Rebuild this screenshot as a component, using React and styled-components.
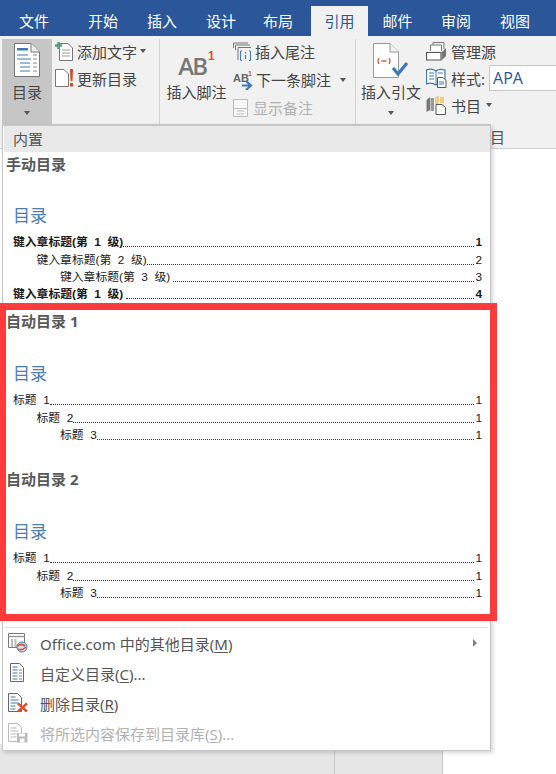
import React from 'react';
import styled, { createGlobalStyle } from 'styled-components';

const GlobalStyle = createGlobalStyle`
  html, body {
    margin: 0;
    padding: 0;
    background: #ffffff;
  }
  body {
    font-family: "Noto Sans", "Noto Sans CJK SC", sans-serif;
  }
`;

const Page = styled.div`
  position: relative;
  width: 556px;
  height: 774px;
  overflow: hidden;
  display: flex;
  flex-direction: column;
  background: #ffffff;
`;

const TabBar = styled.nav`
  height: 36px;
  flex: none;
  display: flex;
  align-items: flex-end;
  background: #2b579a;
`;

const Tab = styled.div`
  width: ${(p) => p.$w}px;
  height: 30px;
  flex: none;
  margin-left: ${(p) => p.$ml || 0}px;
  padding-bottom: 2px;
  box-sizing: border-box;
  display: flex;
  align-items: center;
  justify-content: center;
  font-size: 15px;
  color: ${(p) => (p.$active ? '#2b579a' : '#ffffff')};
  background: ${(p) => (p.$active ? '#f1f1f1' : 'transparent')};
`;

const Ribbon = styled.div`
  height: 113px;
  flex: none;
  display: flex;
  padding-top: 3px;
  box-sizing: border-box;
  background: #f1f1f1;
  border-bottom: 1px solid #d2d2d2;
`;

const Group = styled.section`
  width: ${(p) => p.$w}px;
  height: 85px;
  flex: none;
  display: flex;
  box-sizing: border-box;
  border-right: ${(p) => (p.$last ? 'none' : '1px solid #d4d4d4')};
`;

const BigButton = styled.div`
  width: ${(p) => p.$w}px;
  height: 85px;
  flex: none;
  margin-left: ${(p) => p.$ml || 0}px;
  display: flex;
  flex-direction: column;
  align-items: center;
  background: ${(p) => (p.$active ? '#c6c6c6' : 'transparent')};
  padding-top: ${(p) => p.$pt || 0}px;
  box-sizing: border-box;
`;

const BigLabel = styled.div`
  font-size: 15px;
  line-height: 18px;
  color: #444444;
  margin-top: ${(p) => p.$mt || 0}px;
  white-space: nowrap;
`;

const NoteMark = styled.div`
  height: 30px;
  display: flex;
  align-items: flex-start;
`;

const NoteLetters = styled.span`
  padding-top: 2px;
  font-family: "Open Sans", sans-serif;
  font-size: 24px;
  font-weight: 600;
  line-height: 30px;
  letter-spacing: -2px;
  color: #777777;
`;

const NoteNumber = styled.span`
  margin-left: 2px;
  margin-top: 1px;
  font-family: "Liberation Sans", sans-serif;
  font-size: 12px;
  font-weight: 700;
  line-height: 12px;
  color: #d9532f;
`;

const Caret = styled.span`
  width: 0;
  height: 0;
  display: block;
  border-left: 3.5px solid transparent;
  border-right: 3.5px solid transparent;
  border-top: 4px solid #555555;
  margin-left: ${(p) => p.$ml || 0}px;
  margin-top: ${(p) => p.$mt || 0}px;
`;

const SmallColumn = styled.div`
  display: flex;
  flex-direction: column;
  margin-left: ${(p) => p.$ml || 0}px;
`;

const SmallButton = styled.div`
  height: ${(p) => p.$h || 27}px;
  padding-bottom: 3px;
  box-sizing: border-box;
  display: flex;
  align-items: center;
  gap: ${(p) => p.$gap || 3}px;
  font-size: 15px;
  white-space: nowrap;
  color: ${(p) => (p.$off ? '#b1b1b1' : '#444444')};
`;

const StyleBox = styled.div`
  width: 70px;
  height: 26px;
  margin-left: 0;
  padding-left: 3px;
  box-sizing: border-box;
  display: flex;
  align-items: center;
  font-family: "Open Sans", sans-serif;
  font-size: 16px;
  color: #2b579a;
  background: #ffffff;
  border: 1px solid #c6c6c6;
`;

const GroupClip = styled.span`
  position: absolute;
  left: 490px;
  top: 128px;
  font-size: 15px;
  line-height: 18px;
  color: #555555;
`;

const Desk = styled.div`
  flex: 1;
  display: flex;
  flex-direction: column;
  justify-content: flex-end;
`;

const StatusStrip = styled.div`
  width: 443px;
  height: 30px;
  display: grid;
  grid-template-columns: 335px 108px;
  box-sizing: border-box;
  background: #e6e6e6;
`;

const StatusCell = styled.div`
  border-right: 1px solid #c6c6c6;
`;

const Menu = styled.div`
  position: absolute;
  left: 2px;
  top: 124px;
  width: 489px;
  height: 627px;
  box-sizing: border-box;
  background: #ffffff;
  border: 1px solid #c6c6c6;
  border-top-width: 2px;
  box-shadow: 2px 2px 4px rgba(0, 0, 0, 0.16);
`;

const MenuHeader = styled.div`
  height: 26px;
  margin: 0 0 0 1px;
  padding-left: 9px;
  padding-bottom: 1px;
  box-sizing: border-box;
  display: flex;
  align-items: center;
  font-size: 15px;
  color: #555555;
  background: #e9e9e9;
`;

const GalleryItem = styled.div`
  height: ${(p) => p.$h}px;
  box-sizing: border-box;
  padding: 2px 8px 0 3px;
`;

const GalleryTitle = styled.div`
  height: 20px;
  line-height: 20px;
  font-size: 15px;
  font-weight: 700;
  color: #585858;
`;

const TocHeading = styled.div`
  height: 22px;
  line-height: 22px;
  margin: ${(p) => p.$mt}px 0 6px 7px;
  font-size: 17px;
  color: #4a7eb0;
`;

const TocRow = styled.div`
  height: 17.3px;
  margin-left: ${(p) => 7 + p.$level * 23.5}px;
  display: flex;
  align-items: flex-end;
  font-family: "Liberation Sans", "Noto Sans CJK SC", sans-serif;
  font-size: 11.8px;
  line-height: 15px;
  font-weight: ${(p) => (p.$bold ? 700 : 400)};
  color: #1a1a1a;
`;

const TocText = styled.span`
  white-space: pre;
`;

const Leader = styled.span`
  flex: 1;
  height: 0;
  margin: 0 1px 3px 0;
  border-bottom: 1px dotted #333333;
`;

const Divider = styled.div`
  height: 1px;
  margin: 0 2px 0 2px;
  background: #e1e1e1;
`;

const Command = styled.div`
  height: 30px;
  display: flex;
  align-items: center;
  padding-left: 5px;
  padding-right: 13px;
  font-size: 15px;
  color: ${(p) => (p.$off ? '#b1b1b1' : '#555555')};
`;

const CommandIcon = styled.span`
  width: 32px;
  flex: none;
  display: flex;
`;

const CommandText = styled.span`
  flex: 1;
  u {
    text-underline-offset: 2px;
  }
`;

const SubArrow = styled.span`
  width: 0;
  height: 0;
  border-top: 4px solid transparent;
  border-bottom: 4px solid transparent;
  border-left: 4px solid #808080;
`;

const Highlight = styled.div`
  position: absolute;
  left: 0;
  top: 303px;
  width: 497px;
  height: 318px;
  box-sizing: border-box;
  border: 7px solid #ff3b3b;
  border-left-width: 6px;
  pointer-events: none;
`;

const TocIcon = () => (
  <svg width="26" height="35" viewBox="0 0 26 35">
    <path d="M.5.5H17L25.5 9V33.5H.5Z" fill="#fff" stroke="#777" />
    <path d="M17 .5V9H25.5" fill="#eee" stroke="#777" />
    <path d="M3 5h11v2.5H3z" fill="#3f78b5" />
    <path d="M3 12h11M3 16h14M6 20h10M6 24h10M6 28h10" stroke="#3f78b5" strokeWidth="1" />
    <path d="M19 12h4M19 16h4M19 20h4M19 24h4M19 28h4" stroke="#888" strokeWidth="1" />
  </svg>
);

const AddTextIcon = () => (
  <svg width="19" height="19" viewBox="0 0 19 19">
    <path d="M4.5 1.5H13L17.5 6V18.500H4.500Z" fill="#fff" stroke="#777" />
    <path d="M7 8h8M7 11h8M7 14h8" stroke="#999" />
    <path d="M0 3.500h7M3.500 0v7" stroke="#5a9e83" strokeWidth="2.400" />
  </svg>
);

const UpdateIcon = () => (
  <svg width="19" height="18" viewBox="0 0 19 18">
    <path d="M.5.500H9L13.500 5V17.500H.500Z" fill="#fff" stroke="#777" />
    <path d="M15 0h3l-.500 12h-2Z" fill="#d9472b" />
    <rect x="15" y="14" width="3" height="3.500" fill="#d9472b" />
  </svg>
);

const EndnoteIcon = () => (
  <svg width="20" height="20" viewBox="0 0 20 20">
    <path d="M.5 6V1H15" fill="none" stroke="#777" />
    <path d="M2.500 8V3H17" fill="none" stroke="#777" />
    <path d="M5 18V5.500H18" fill="none" stroke="#777" />
    <path d="M9 9H7.500V18.500H9M16 9h1.500V18.500H16" fill="none" stroke="#3f78b5" />
    <path d="M12.500 10v1.500M12.500 13v4" stroke="#3f78b5" strokeWidth="1.200" />
  </svg>
);

const NextNoteIcon = () => (
  <svg width="21" height="21" viewBox="0 0 21 21">
    <text x="0" y="13" fontFamily="Liberation Sans" fontWeight="700" fontSize="11" fill="#666666">AB</text>
    <text x="15" y="7" fontFamily="Liberation Sans" fontWeight="700" fontSize="7" fill="#d9532f">1</text>
    <path d="M9 16.500h8M13 12l5 4.500-5 4.500" fill="none" stroke="#3f78b5" strokeWidth="2.200" />
  </svg>
);

const ShowNotesIcon = () => (
  <svg width="15" height="18" viewBox="0 0 15 18">
    <path d="M.5.500H14.500V17.500H.5Z" fill="#f7f7f7" stroke="#bcbcbc" />
    <path d="M.5 9.500H14.500M4 12h7M4 15h7" stroke="#bcbcbc" />
  </svg>
);

const CitationIcon = () => (
  <svg width="36" height="35" viewBox="0 0 36 35">
    <path d="M.5.500H17L25.500 9V34.500H.5Z" fill="#fff" stroke="#999" />
    <path d="M17 .500V9H25.500" fill="#f1f1f1" stroke="#999" />
    <path d="M6 15q-2 3 0 6M16 15q2 3 0 6" fill="none" stroke="#d9532f" strokeWidth="1.200" />
    <path d="M8.500 18h5" stroke="#d9532f" strokeWidth="1.400" />
    <path d="M20 25l5 6 9-11" fill="none" stroke="#3f78b5" strokeWidth="3.200" />
  </svg>
);

const SourcesIcon = () => (
  <svg width="21" height="19" viewBox="0 0 21 19">
    <path d="M7 5V.5H18V7" fill="none" stroke="#777" />
    <path d="M4.500 9V3H15.500V9" fill="#fff" stroke="#777" />
    <path d="M.5 10.500H15V18H.5Z" fill="#fff" stroke="#555" strokeWidth="1.200" />
    <path d="M16 10l4-4v8l-4 4Z" fill="#777" />
  </svg>
);

const StyleIcon = () => (
  <svg width="21" height="20" viewBox="0 0 21 20">
    <path d="M10 3C7 1 3 1 .5 2V16C3 15 7 15 10 17 12 15 15 15 19 16V2C15 1 12 1 10 3Z" fill="#fff" stroke="#3f78b5" strokeWidth="1.200" />
    <path d="M10 3V17M3 5h5M3 8h5M3 11h5M12 5h5" stroke="#3f78b5" />
    <path d="M11.500 9.500H17L20 12.500V19.500H11.500Z" fill="#fff" stroke="#555" />
    <path d="M13 14h5M13 16h5" stroke="#3f78b5" />
  </svg>
);

const BibliographyIcon = () => (
  <svg width="21" height="20" viewBox="0 0 21 20">
    <path d="M.5 5L4 2V15L.5 17Z" fill="#777" />
    <path d="M4.500 3H8V16H4.500Z" fill="#999" />
    <path d="M9 2L13 1V9H9Z" fill="#f0cb84" />
    <path d="M14 2H18V8H14Z" fill="#f0cb84" />
    <path d="M10 9.500H16L19.500 12.500V19.500H10Z" fill="#fff" stroke="#555" />
  </svg>
);

const MoreIcon = () => (
  <svg width="20" height="20" viewBox="0 0 20 20">
    <path d="M.5.500H16.500V14.500H.5Z" fill="#fff" stroke="#777" />
    <path d="M.5 3.500H16.500" stroke="#999" strokeWidth="1.500" />
    <path d="M3 6h2v8H3zM6.500 6h2v8h-2z" fill="#bbb" />
    <circle cx="14" cy="14" r="5" fill="#d8e6f2" stroke="#3f78b5" />
    <path d="M9 13q5-3 8 0" fill="none" stroke="#d9532f" strokeWidth="1.800" />
    <path d="M18 14q-4 4-8 2" fill="none" stroke="#d9532f" strokeWidth="1.500" />
  </svg>
);

const CustomIcon = () => (
  <svg width="20" height="20" viewBox="0 0 20 20">
    <path d="M2.500.500H11.500L15.500 4.500V18.500H2.500Z" fill="#fff" stroke="#666" />
    <path d="M4.500 4h5M4.500 7h5M4.500 10h5M4.500 13h5M4.500 16h5" stroke="#3f78b5" />
    <path d="M11 7h3M11 10h3M11 13h3M11 16h3" stroke="#888" />
  </svg>
);

const RemoveIcon = () => (
  <svg width="20" height="20" viewBox="0 0 20 20">
    <path d="M.5.500H9.500L13.500 4.500V18.500H.5Z" fill="#fff" stroke="#666" />
    <path d="M2.500 4h5M2.500 7h8M2.500 10h8M2.500 13h5M2.500 16h5" stroke="#3f78b5" />
    <path d="M10 10.500l9 8M19 10.500l-9 8" stroke="#d9532f" strokeWidth="2.400" />
  </svg>
);

const SaveIcon = () => (
  <svg width="20" height="20" viewBox="0 0 20 20">
    <path d="M.5.500H9.500L13.500 4.500V18.500H.5Z" fill="#fff" stroke="#b9b9b9" />
    <path d="M2.500 5h6M2.500 8h8M2.500 11h6M2.500 14h6" stroke="#b9b9b9" />
    <path d="M9 10H19.500V19.500H9Z" fill="#b9b9b9" />
    <path d="M11 10.500h6v3h-6zM12 15.500h4.500v4H12z" fill="#fff" />
  </svg>
);

const tabs = [
  { label: '文件', w: 68 },
  { label: '开始', w: 48, ml: 11 },
  { label: '插入', w: 70 },
  { label: '设计', w: 48 },
  { label: '布局', w: 66 },
  { label: '引用', w: 57, active: true },
  { label: '邮件', w: 59 },
  { label: '审阅', w: 58 },
  { label: '视图', w: 60 },
];

const manualRows = [
  { text: '键入章标题(第  1  级)', level: 0, page: '1', bold: true },
  { text: '键入章标题(第  2  级)', level: 1, page: '2' },
  { text: '键入章标题(第  3  级) ', level: 2, page: '3' },
  { text: '键入章标题(第  1  级) ', level: 0, page: '4', bold: true },
];

const autoRows = [
  { text: '标题  1', level: 0, page: '1' },
  { text: '标题  2', level: 1, page: '1' },
  { text: '标题  3', level: 2, page: '1' },
];

const galleries = [
  { title: '手动目录', rows: manualRows, h: 157, gap: 31 },
  { title: '自动目录 1', rows: autoRows, h: 158, gap: 32 },
  { title: '自动目录 2', rows: autoRows, h: 160, gap: 32 },
];

const commands = [
  { icon: <MoreIcon />, text: 'Office.com 中的其他目录(', key: 'M', tail: ')', more: true },
  { icon: <CustomIcon />, text: '自定义目录(', key: 'C', tail: ')...' },
  { icon: <RemoveIcon />, text: '删除目录(', key: 'R', tail: ')' },
  { icon: <SaveIcon />, text: '将所选内容保存到目录库(', key: 'S', tail: ')...', off: true },
];

const App = () => (
  <Page>
    <GlobalStyle />
    <TabBar>
      {tabs.map((t) => (
        <Tab key={t.label} $w={t.w} $ml={t.ml} $active={t.active}>
          {t.label}
        </Tab>
      ))}
    </TabBar>
    <Ribbon>
      <Group $w={160}>
        <BigButton $w={50} $ml={2} $pt={4} $active>
          <TocIcon />
          <BigLabel $mt={5}>目录</BigLabel>
          <Caret $mt={10} />
        </BigButton>
        <SmallColumn $ml={3}>
          <SmallButton>
            <AddTextIcon />
            添加文字
            <Caret />
          </SmallButton>
          <SmallButton>
            <UpdateIcon />
            更新目录
          </SmallButton>
        </SmallColumn>
      </Group>
      <Group $w={196}>
        <BigButton $w={73} $pt={10}>
          <NoteMark>
            <NoteLetters>AB</NoteLetters>
            <NoteNumber>1</NoteNumber>
          </NoteMark>
          <BigLabel $mt={4}>插入脚注</BigLabel>
        </BigButton>
        <SmallColumn>
          <SmallButton $h={28} $gap={2}>
            <EndnoteIcon />
            插入尾注
          </SmallButton>
          <SmallButton $h={28} $gap={2}>
            <NextNoteIcon />
            下一条脚注
            <Caret $ml={7} />
          </SmallButton>
          <SmallButton $h={28} $off $gap={5}>
            <ShowNotesIcon />
            显示备注
          </SmallButton>
        </SmallColumn>
      </Group>
      <Group $w={200} $last>
        <BigButton $w={70} $pt={4}>
          <CitationIcon />
          <BigLabel $mt={5}>插入引文</BigLabel>
          <Caret $mt={10} />
        </BigButton>
        <SmallColumn>
          <SmallButton $gap={4}>
            <SourcesIcon />
            管理源
          </SmallButton>
          <SmallButton $gap={4}>
            <StyleIcon />
            样式:
            <StyleBox>APA</StyleBox>
          </SmallButton>
          <SmallButton $gap={4}>
            <BibliographyIcon />
            书目
            <Caret $ml={1} />
          </SmallButton>
        </SmallColumn>
      </Group>
    </Ribbon>
    <GroupClip>目</GroupClip>
    <Desk>
      <StatusStrip>
        <StatusCell />
        <StatusCell />
      </StatusStrip>
    </Desk>
    <Menu>
      <MenuHeader>内置</MenuHeader>
      {galleries.map((g) => (
        <GalleryItem key={g.title} $h={g.h}>
          <GalleryTitle>{g.title}</GalleryTitle>
          <TocHeading $mt={g.gap}>目录</TocHeading>
          {g.rows.map((r) => (
            <TocRow key={r.text} $level={r.level} $bold={r.bold}>
              <TocText>{r.text}</TocText>
              <Leader />
              <span>{r.page}</span>
            </TocRow>
          ))}
        </GalleryItem>
      ))}
      <Divider />
      {commands.map((c) => (
        <Command key={c.key} $off={c.off}>
          <CommandIcon>{c.icon}</CommandIcon>
          <CommandText>
            {c.text}
            <u>{c.key}</u>
            {c.tail}
          </CommandText>
          {c.more && <SubArrow />}
        </Command>
      ))}
    </Menu>
    <Highlight />
  </Page>
);

export default App;
